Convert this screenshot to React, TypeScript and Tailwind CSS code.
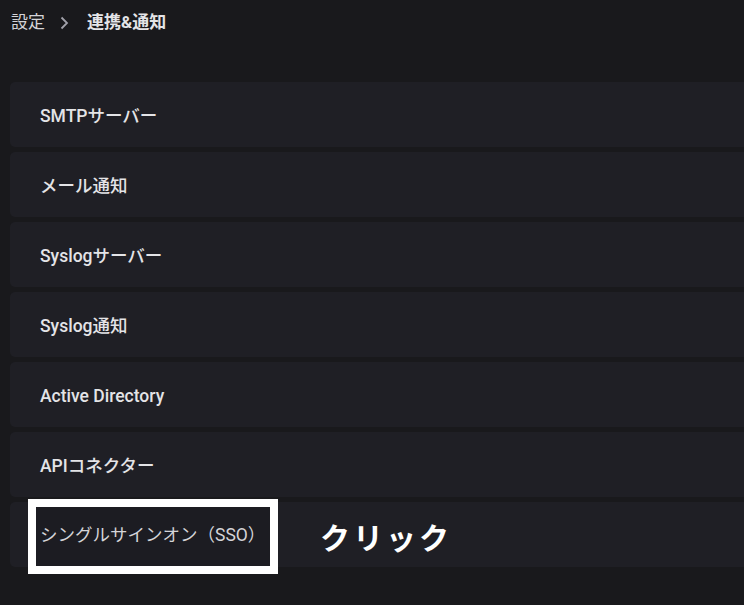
const items = [
  "SMTPサーバー",
  "メール通知",
  "Syslogサーバー",
  "Syslog通知",
  "Active Directory",
  "APIコネクター",
];

const font = {
  fontFamily: 'Roboto, "Noto Sans CJK JP", sans-serif',
};

const App = () => {
  return (
    <div
      className="w-[744px] h-[605px] overflow-hidden bg-[#19191c] text-[#e4e4e7]"
      style={font}
    >
      <div className="flex items-center h-[46px] pl-[11px] text-[17px]">
        <span className="text-[#d4d4d8]">設定</span>
        <svg
          className="ml-[14px] mr-[18px]"
          width="10"
          height="14"
          viewBox="0 0 10 14"
          fill="none"
        >
          <path
            d="M2.5 1.5 L8 7 L2.5 12.5"
            stroke="#a1a1aa"
            strokeWidth="1.8"
          />
        </svg>
        <span className="font-bold text-[#e4e4e7]">連携&amp;通知</span>
      </div>

      <div className="flex flex-col gap-[5px] pl-[10px] mt-[36px]">
        {items.map((label) => (
          <div
            key={label}
            className="h-[65px] flex items-center pl-[30px] pt-[3px] rounded-l-[5px] bg-[#1f1f25] text-[17.5px] font-medium"
          >
            {label}
          </div>
        ))}
        <div className="relative h-[65px] flex items-center pl-[30px] rounded-l-[5px] bg-[#1f1f25]">
          <div className="absolute left-[18px] top-[-3px] w-[250px] h-[75px] border-[8px] border-white bg-[#1c1c22]" />
          <span className="relative text-[17.5px] text-[#d4d4d8] pt-[1px]">
            シングルサインオン（SSO）
          </span>
          <span
            className="absolute left-[310px] top-[19px] text-[30px] leading-none font-bold text-white tracking-[3px]"
            style={{ fontFamily: '"Noto Sans CJK JP", sans-serif' }}
          >
            クリック
          </span>
        </div>
      </div>
    </div>
  );
};

export default App;
